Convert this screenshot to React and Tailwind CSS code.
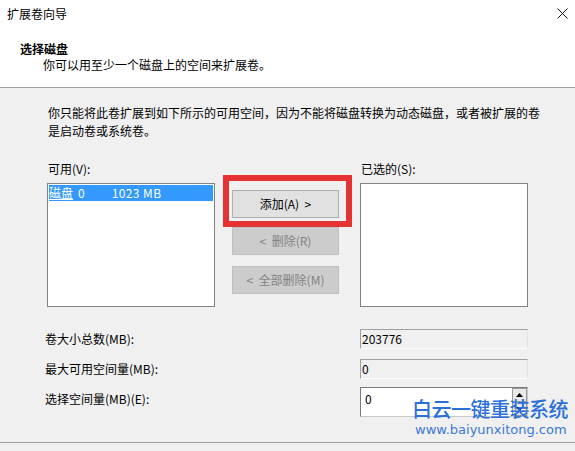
import React from 'react';

// Extend Volume wizard — "select disks" page
function ReadonlyField({ value }) {
  return (
    <div className="h-[20px] w-[168px] border border-[#a0a0a0] border-r-[#e3e3e3] border-b-white bg-[#f0f0f0] pl-[1px] text-[12px] leading-[18px] text-black">
      {value}
    </div>
  );
}

function WizardButton({ children, disabled }) {
  return (
    <div
      className={
        disabled
          ? 'flex h-[28px] w-[107px] items-center justify-center border border-[#bfbfbf] bg-[#cccccc] text-[12px] text-[#838383]'
          : 'flex h-[28px] w-[107px] items-center justify-center border border-[#adadad] bg-[#e1e1e1] text-[12px] text-black'
      }
    >
      {children}
    </div>
  );
}

export default function App() {
  return (
    <div className="relative flex h-[451px] w-[575px] flex-col overflow-hidden bg-[#f0f0f0] font-['Noto_Sans_CJK_SC',sans-serif] text-black">
      {/* header */}
      <div className="relative h-[88px] shrink-0 border-b border-[#a0a0a0] bg-white">
        <div className="pl-[7px] pt-[6px] text-[12px] leading-[16px]">扩展卷向导</div>
        <div className="mt-[19px] pl-[20px] text-[12px] font-bold leading-[16px]">选择磁盘</div>
        <div className="pl-[43px] text-[12px] leading-[16px]">你可以用至少一个磁盘上的空间来扩展卷。</div>
        <svg className="absolute right-[7px] top-[8px]" width="11" height="11" viewBox="0 0 11 11">
          <path d="M0.5 0.5 L10.5 10.5 M10.5 0.5 L0.5 10.5" stroke="#111" strokeWidth="1" />
        </svg>
      </div>

      {/* body */}
      <div className="h-[354px] shrink-0 pl-[47px] pt-[16px]">
        <p className="whitespace-nowrap pl-px text-[12px] leading-[18px]">
          你只能将此卷扩展到如下所示的可用空间，因为不能将磁盘转换为动态磁盘，或者被扩展的卷
          <br />
          是启动卷或系统卷。
        </p>

        <div className="mt-[20px] flex items-start">
          <div className="flex w-[168px] flex-col">
            <span className="pl-px text-[12px] leading-[18px]">可用(V):</span>
            <div className="mt-[5px] h-[124px] border border-[#828282] bg-white p-px">
              <div className="flex h-[16px] items-center bg-[#3399ff] text-[12px] leading-[16px] text-white">
                <span className="underline">磁盘</span>
                <span className="ml-[5px]">0</span>
                <span className="ml-[27px] tracking-[0.4px]">1023 MB</span>
              </div>
            </div>
          </div>

          <div className="relative ml-[17px] flex flex-col pt-[30px]">
            <WizardButton>添加(A)&nbsp;&nbsp;&gt;</WizardButton>
            <div className="mt-[9px]">
              <WizardButton disabled>&lt;&nbsp;&nbsp;删除(R)</WizardButton>
            </div>
            <div className="mt-[11px]">
              <WizardButton disabled>&lt;&nbsp;&nbsp;全部删除(M)</WizardButton>
            </div>
            {/* red annotation frame */}
            <div className="absolute left-[-9px] top-[15px] h-[52px] w-[129px] border-[6px] border-[#e53333]" />
          </div>

          <div className="ml-[21px] flex w-[168px] flex-col">
            <span className="pl-px text-[12px] leading-[18px]">已选的(S):</span>
            <div className="mt-[5px] h-[124px] border border-[#828282] bg-white" />
          </div>
        </div>

        <div className="mt-[22px] flex items-center">
          <span className="ml-[-2px] w-[315px] text-[12px] leading-[18px]">卷大小总数(MB):</span>
          <ReadonlyField value="203776" />
        </div>
        <div className="mt-[10px] flex items-center">
          <span className="ml-[-2px] w-[315px] text-[12px] leading-[18px]">最大可用空间量(MB):</span>
          <ReadonlyField value="0" />
        </div>
        <div className="mt-[8px] flex items-start">
          <span className="ml-[-2px] mt-[3px] w-[315px] text-[12px] leading-[18px]">选择空间量(MB)(E):</span>
          <div className="flex h-[30px] w-[168px] border border-[#7a7a7a] border-r-[#c8c8c8] border-b-[#c8c8c8] bg-white">
            <span className="flex-1 pl-[4px] pt-[2px] text-[12px] leading-[18px]">0</span>
            <div className="flex w-[15px] flex-col">
              <div className="flex h-[14px] items-center justify-center border border-[#9a9a9a] bg-[#e8e8e8]">
                <svg width="7" height="4" viewBox="0 0 7 4">
                  <path d="M0 4 L3.5 0 L7 4 Z" fill="#000" />
                </svg>
              </div>
              <div className="flex h-[14px] items-center justify-center border border-t-0 border-[#9a9a9a] bg-[#e8e8e8]">
                <svg width="7" height="4" viewBox="0 0 7 4">
                  <path d="M0 0 L3.5 4 L7 0 Z" fill="#000" />
                </svg>
              </div>
            </div>
          </div>
        </div>
      </div>

      {/* footer strip */}
      <div className="flex-1 border-t border-[#a0a0a0] bg-[#f0f0f0]" />

      {/* watermark */}
      <div className="absolute left-[412px] top-[396px] flex flex-col items-start">
        <span className="whitespace-nowrap text-[20px] font-medium leading-[26px] tracking-[-0.5px] text-[#2b6fd8]">白云一键重装系统</span>
        <span className="whitespace-nowrap pl-[3px] font-['DejaVu_Sans',sans-serif] text-[13px] leading-[16px] text-[#3a78d6]">
          www.baiyunxitong.com
        </span>
      </div>
    </div>
  );
}
